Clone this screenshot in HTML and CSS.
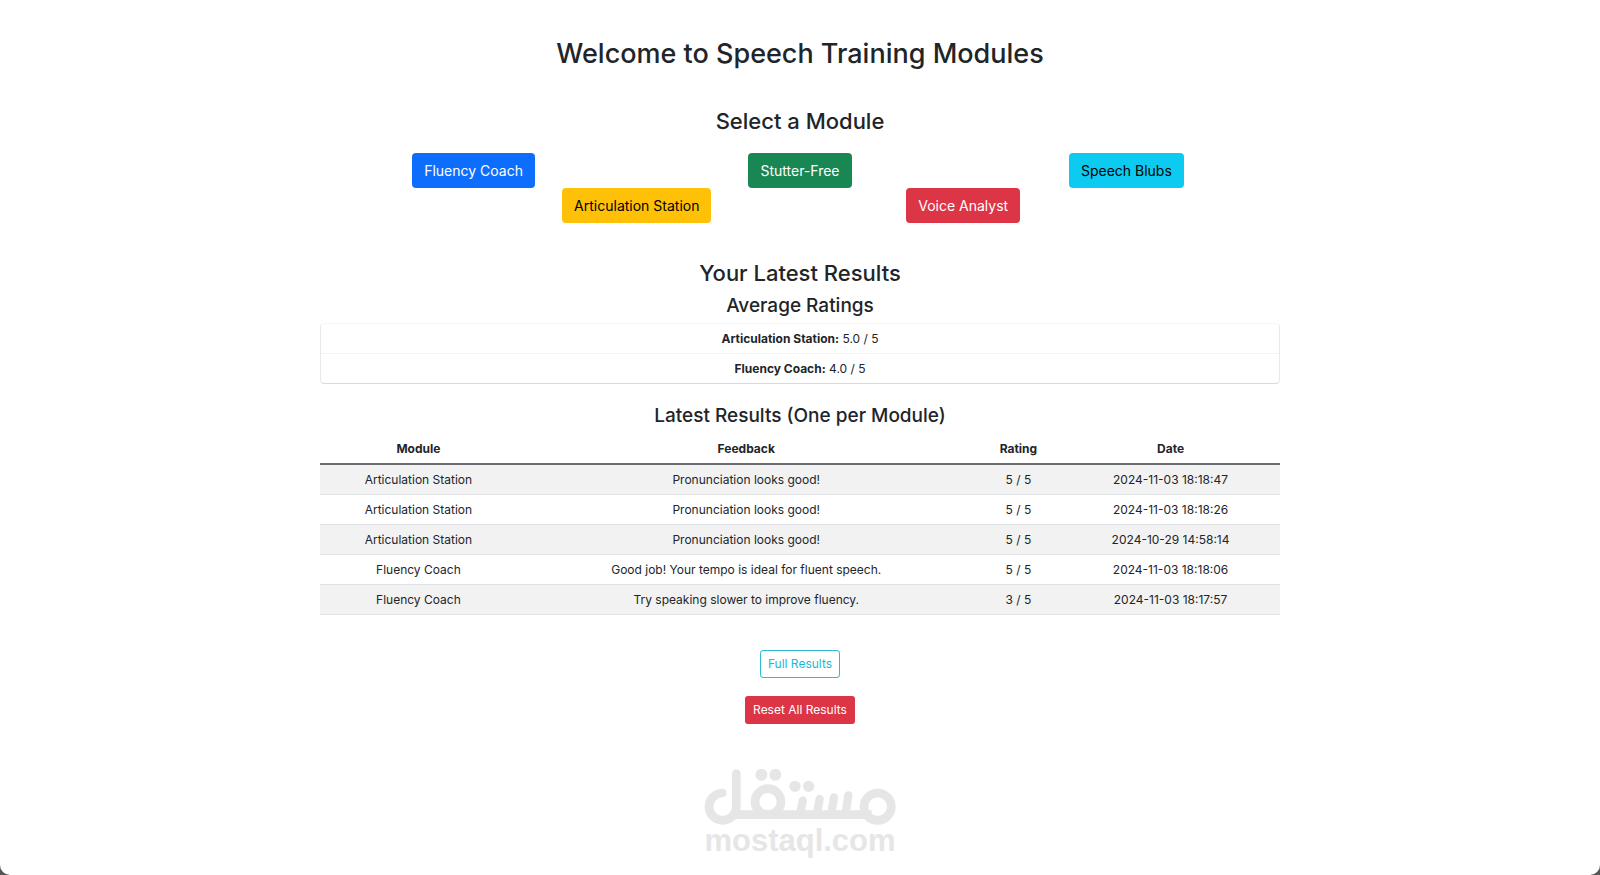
FILE: index.html
```
<!DOCTYPE html>
<html lang="en">
<head>
<meta charset="utf-8">
<meta name="viewport" content="width=device-width, initial-scale=1">
<title>Speech Training Modules</title>
<link rel="stylesheet" href="styles.css">
</head>
<body>
<div class="page">
  <main class="container">
    <h1 class="title">Welcome to Speech Training Modules</h1>

    <section class="modules">
      <h2 class="section-title">Select a Module</h2>
      <div class="module-grid">
        <div class="module"><button type="button" class="btn btn-primary">Fluency Coach</button></div>
        <div class="module"><button type="button" class="btn btn-warning">Articulation Station</button></div>
        <div class="module"><button type="button" class="btn btn-success">Stutter-Free</button></div>
        <div class="module"><button type="button" class="btn btn-danger">Voice Analyst</button></div>
        <div class="module"><button type="button" class="btn btn-info">Speech Blubs</button></div>
      </div>
    </section>

    <section class="results">
      <h2 class="section-title">Your Latest Results</h2>
      <h3 class="sub-title">Average Ratings</h3>
      <ul class="ratings">
        <li class="rating"><strong>Articulation Station:</strong> 5.0 / 5</li>
        <li class="rating"><strong>Fluency Coach:</strong> 4.0 / 5</li>
      </ul>

      <h3 class="sub-title">Latest Results (One per Module)</h3>
      <table class="table">
        <colgroup>
          <col class="col-module"><col class="col-feedback"><col class="col-rating"><col class="col-date">
        </colgroup>
        <thead>
          <tr><th scope="col">Module</th><th scope="col">Feedback</th><th scope="col">Rating</th><th scope="col">Date</th></tr>
        </thead>
        <tbody>
          <tr><td>Articulation Station</td><td>Pronunciation looks good!</td><td>5 / 5</td><td>2024-11-03 18:18:47</td></tr>
          <tr><td>Articulation Station</td><td>Pronunciation looks good!</td><td>5 / 5</td><td>2024-11-03 18:18:26</td></tr>
          <tr><td>Articulation Station</td><td>Pronunciation looks good!</td><td>5 / 5</td><td>2024-10-29 14:58:14</td></tr>
          <tr><td>Fluency Coach</td><td>Good job! Your tempo is ideal for fluent speech.</td><td>5 / 5</td><td>2024-11-03 18:18:06</td></tr>
          <tr><td>Fluency Coach</td><td>Try speaking slower to improve fluency.</td><td>3 / 5</td><td>2024-11-03 18:17:57</td></tr>
        </tbody>
      </table>
    </section>

    <div class="actions">
      <button type="button" class="btn btn-sm btn-outline-info">Full Results</button>
      <button type="button" class="btn btn-sm btn-danger">Reset All Results</button>
    </div>
  </main>

  <footer class="brand">
    <svg class="brand-mark" viewBox="42 40 576 172" role="img" aria-label="مستقل">
      <g fill="none" stroke="#e6e6e6" stroke-width="26" stroke-linecap="round" stroke-linejoin="round">
        <path d="M97 115A41 41 0 1 0 139 156V57"/>
        <path d="M134 180H545" stroke-linecap="butt"/>
        <circle cx="234" cy="141" r="39"/>
        <circle cx="563" cy="156" r="41"/>
        <path d="M338 138L331 176M389 133L381 176M432 128L424 176M475 122L467 176" stroke-width="25"/>
      </g>
      <g fill="#e6e6e6">
        <circle cx="214" cy="60" r="18"/><circle cx="256" cy="60" r="18"/>
        <circle cx="315" cy="95" r="17"/><circle cx="356" cy="95" r="17"/>
      </g>
    </svg>
    <span class="brand-name">mostaql.com</span>
  </footer>
</div>
</body>
</html>
```
FILE: styles.css
```
* {
  box-sizing: border-box;
}

body {
  margin: 0;
  background: #555;
  color: #212529;
  font: 400 12px/17px Inter, "Liberation Sans", sans-serif;
}

.page {
  min-height: 100vh;
  padding: 36px 20px 16px;
  background: #fff;
  border-radius: 0 0 10px 10px;
}

.container {
  max-width: 960px;
  margin: 0 auto;
  text-align: center;
}

.title,
.section-title,
.sub-title {
  margin: 0;
  font-weight: 500;
}

.title {
  font-size: 27px;
  line-height: 36px;
}

.section-title {
  font-size: 22px;
  line-height: 28px;
}

.sub-title {
  font-size: 19px;
  line-height: 24px;
}

.modules {
  margin-top: 35px;
}

.module-grid {
  display: grid;
  grid-template-columns: repeat(5, 1fr);
  width: 85%;
  margin: 18px auto 0;
}

.module:nth-child(even) {
  padding-top: 35px;
}

.btn {
  padding: 5px 11px;
  border: 1px solid transparent;
  border-radius: 4px;
  font: 400 14px/23px Inter, "Liberation Sans", sans-serif;
  white-space: nowrap;
  vertical-align: top;
  cursor: pointer;
}

.btn-primary {
  background: #0d6efd;
  color: #fff;
}

.btn-warning {
  background: #ffc107;
  color: #000;
}

.btn-success {
  background: #198754;
  color: #fff;
}

.btn-danger {
  background: #dc3545;
  color: #fff;
}

.btn-info {
  background: #0dcaf0;
  color: #000;
}

.btn-sm {
  padding: 4px 7px;
  border-radius: 3px;
  font-size: 12px;
  line-height: 18px;
}

.btn-outline-info {
  border-color: #31b9d3;
  background: #fff;
  color: #22b8d5;
}

.results {
  margin-top: 36px;
}

.results .section-title {
  margin-bottom: 7px;
}

.ratings {
  margin: 5px 0 20px;
  padding: 0;
  border: 1px solid #e9e9ea;
  border-top-color: #f7f7f7;
  border-bottom-color: #d9dadb;
  border-radius: 4px;
  list-style: none;
}

.rating {
  padding: 6px 16px;
}

.rating + .rating {
  border-top: 1px solid #f4f4f4;
}

.table {
  width: 100%;
  margin-top: 6px;
  border-collapse: collapse;
  table-layout: fixed;
}

.col-module {
  width: 20.5%;
}

.col-feedback {
  width: 47.8%;
}

.col-rating {
  width: 8.9%;
}

.col-date {
  width: 22.8%;
}

.table th,
.table td {
  padding: 6px 4px;
  border-bottom: 1px solid #dfe1e3;
}

.table thead th {
  border-bottom: 2px solid #6b6c70;
}

.table tbody tr:nth-child(odd) {
  background: #f2f2f2;
}

.actions {
  display: flex;
  flex-direction: column;
  align-items: center;
  gap: 18px;
  margin-top: 35px;
}

.brand {
  display: flex;
  flex-direction: column;
  align-items: center;
  margin-top: 44px;
  color: #e6e6e6;
}

.brand-mark {
  width: 192px;
}

.brand-name {
  font: 700 31px/32px "Liberation Sans", Arial, sans-serif;
}
```
